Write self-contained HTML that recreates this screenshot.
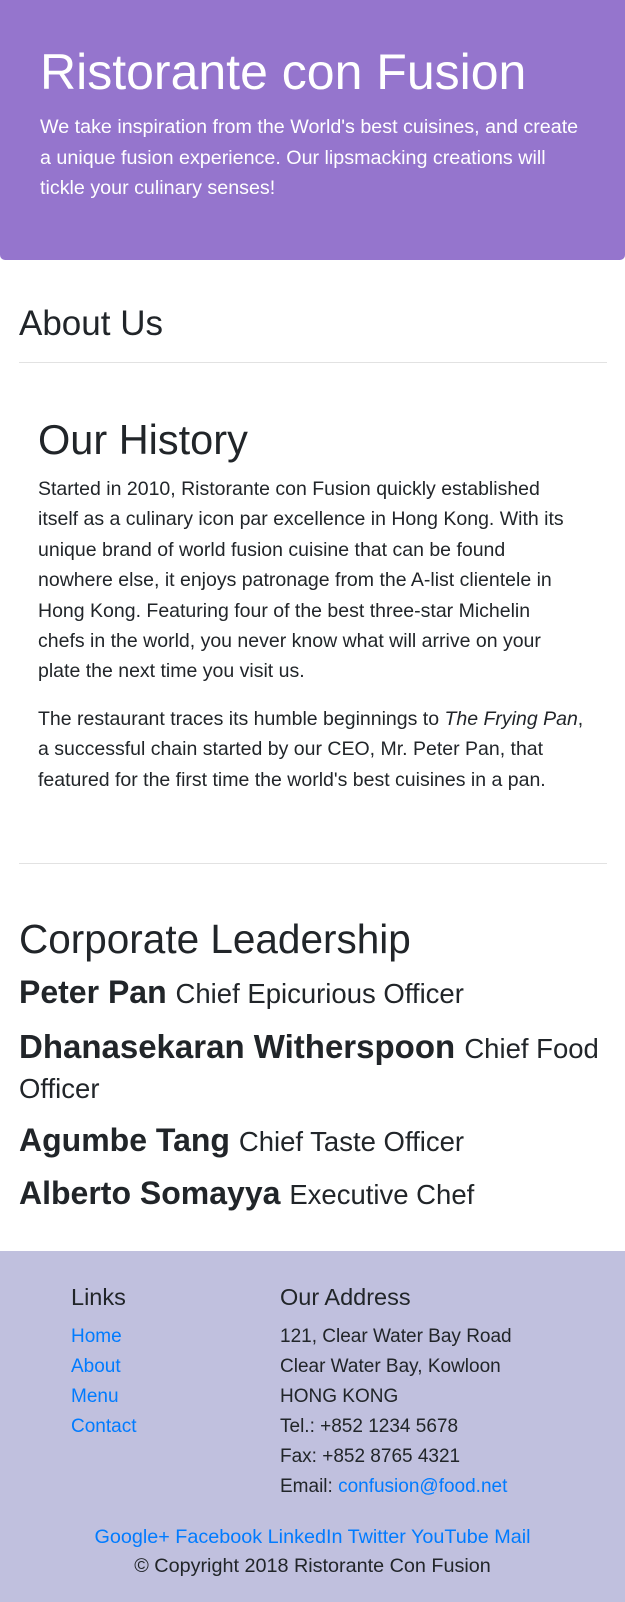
<!DOCTYPE html>
<html><head><meta charset="utf-8"><style>
*{margin:0;padding:0;box-sizing:border-box}
body{width:625px;height:1602px;position:relative;font-family:"Liberation Sans",sans-serif;color:#212529;background:#fff;overflow:hidden}
.a{position:absolute;white-space:nowrap}
.jumbo{position:absolute;left:0;top:0;width:625px;height:260px;background:#9575cd;border-radius:0 0 5px 5px}
a{color:#007bff;text-decoration:none}
.hr{position:absolute;left:19px;width:588px;height:1px;background:#e2e2e2}
.p{position:absolute;left:38px;font-size:19.5px;line-height:30.4px;width:580px}
.foot{position:absolute;left:0;top:1251px;width:625px;height:351px;background:#c0c0de}
.l{font-size:19px;line-height:30px}
</style></head><body>
<div class="jumbo"></div>
<div class="a" style="left:40px;top:42px;font-size:50px;color:#fff;line-height:60px">Ristorante con Fusion</div>
<div class="a" style="left:40px;top:112px;font-size:19.7px;line-height:30.6px;color:#fff">We take inspiration from the World's best cuisines, and create<br>a unique fusion experience. Our lipsmacking creations will<br>tickle your culinary senses!</div>
<div class="a" style="left:19px;top:302px;font-size:35px;line-height:44px">About Us</div>
<div class="hr" style="top:362px"></div>
<div class="a" style="left:38px;top:415px;font-size:41.5px;line-height:50px">Our History</div>
<div class="p" style="top:474px">Started in 2010, Ristorante con Fusion quickly established<br>itself as a culinary icon par excellence in Hong Kong. With its<br>unique brand of world fusion cuisine that can be found<br>nowhere else, it enjoys patronage from the A-list clientele in<br>Hong Kong. Featuring four of the best three-star Michelin<br>chefs in the world, you never know what will arrive on your<br>plate the next time you visit us.</div>
<div class="p" style="top:704px">The restaurant traces its humble beginnings to <i>The Frying Pan</i>,<br>a successful chain started by our CEO, Mr. Peter Pan, that<br>featured for the first time the world's best cuisines in a pan.</div>
<div class="hr" style="top:863px"></div>
<div class="a" style="left:19px;top:914px;font-size:40.5px;line-height:50px">Corporate Leadership</div>
<div class="a" style="left:19px;top:972px;font-size:32px;line-height:40px"><b style="font-weight:600">Peter Pan</b> <span style="font-size:27.5px">Chief Epicurious Officer</span></div>
<div class="a" style="left:19px;top:1027px;font-size:33px;line-height:40px"><b style="font-weight:600">Dhanasekaran Witherspoon</b> <span style="font-size:27.5px">Chief Food</span></div>
<div class="a" style="left:19px;top:1071px;font-size:27.5px;line-height:36px">Officer</div>
<div class="a" style="left:19px;top:1120px;font-size:32px;line-height:40px"><b style="font-weight:600">Agumbe Tang</b> <span style="font-size:27.5px">Chief Taste Officer</span></div>
<div class="a" style="left:19px;top:1173px;font-size:32px;line-height:40px"><b style="font-weight:600">Alberto Somayya</b> <span style="font-size:27.5px">Executive Chef</span></div>
<div class="foot"></div>
<div class="a" style="left:71px;top:1282px;font-size:23.5px;line-height:30px">Links</div>
<div class="a" style="left:280px;top:1282px;font-size:23.5px;line-height:30px">Our Address</div>
<div class="a l" style="left:71px;top:1322px"><a>Home</a><br><a>About</a><br><a>Menu</a><br><a>Contact</a></div>
<div class="a l" style="left:280px;top:1322px">121, Clear Water Bay Road<br>Clear Water Bay, Kowloon<br>HONG KONG<br>Tel.: +852 1234 5678<br>Fax: +852 8765 4321<br>Email: <a>confusion@food.net</a></div>
<div class="a l" style="left:0;width:625px;text-align:center;top:1522px;font-size:19.8px"><a>Google+</a> <a>Facebook</a> <a>LinkedIn</a> <a>Twitter</a> <a>YouTube</a> <a>Mail</a></div>
<div class="a l" style="left:0;width:625px;text-align:center;top:1551px;font-size:19.8px">© Copyright 2018 Ristorante Con Fusion</div>
</body></html>
